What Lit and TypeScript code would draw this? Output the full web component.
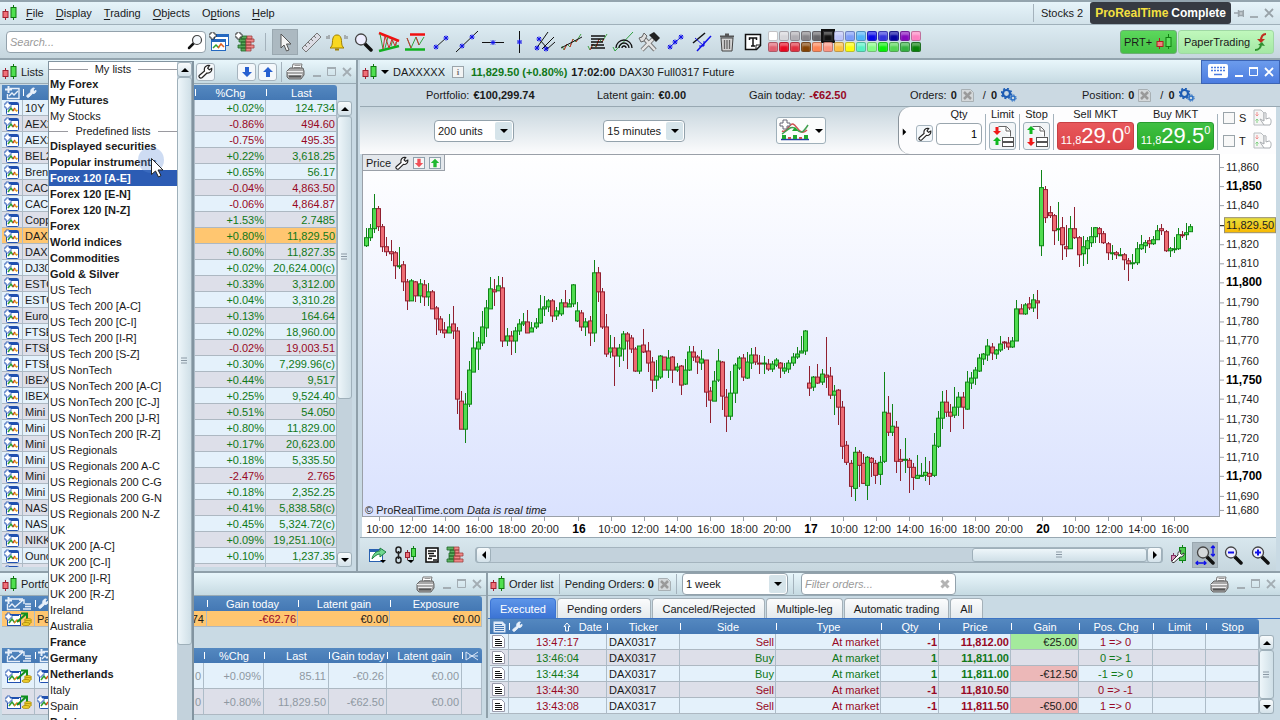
import { LitElement, html, svg, css, nothing } from "lit";
import { customElement } from "lit/decorators.js";
import { classMap } from "lit/directives/class-map.js";

/* ---------- data ---------- */

// candle: direction, wick top, body top, body bottom, wick bottom
const CANDLES = `g229,238,246,248 g225,229,238,242 g195,209,229,234 r207,209,227,232 r225,227,247,253 r238,247,252,257 r241,252,254,262 r252,253,266,280 g248,266,267,270 r262,265,282,292
r280,282,301,311 g280,281,301,302 r282,282,296,303 g280,284,296,304 r281,285,297,307 g284,292,297,307 r291,292,309,310 r307,308,319,336 r317,319,330,334 r323,330,333,339
g315,327,333,334 r307,324,331,340 r328,331,399,414 r391,401,429,429 g393,404,429,443 g361,370,404,407 g333,348,372,372 g338,342,349,370 g312,327,343,346 g301,308,328,338
g278,289,309,309 r280,290,292,307 g277,286,291,292 r278,288,341,347 g329,336,341,346 r332,336,341,355 g328,331,341,353 g320,324,331,336 g314,322,324,327 r311,322,333,334
g323,328,332,332 g319,323,327,330 g296,309,323,325 g297,307,309,317 g300,301,307,313 r300,301,316,323 g308,311,316,321 g300,303,314,317 r291,303,307,308 g300,304,307,308
g285,285,304,308 g303,311,321,323 r311,313,327,332 g319,322,327,337 r317,321,333,346 g261,273,333,343 r268,273,292,303 r289,292,327,330 r315,327,354,357 g336,348,352,358
r338,348,356,386 g345,348,356,367 g332,334,349,361 r333,334,341,369 r336,338,349,353 r347,349,371,372 g346,346,371,374 r330,345,352,353 r343,351,363,372 r357,362,380,392
g360,376,380,389 g355,356,377,379 r357,357,370,370 g350,358,370,378 r356,357,370,383 g363,367,370,372 r365,366,385,395 g359,370,384,385 g346,352,370,371 r346,352,357,361
r355,357,362,374 g350,359,363,370 r360,360,392,407 r387,391,400,423 g371,381,401,401 g349,361,380,382 r361,362,396,410 r389,397,416,432 g371,393,416,420 g363,365,393,403
g356,358,368,370 r354,358,377,381 g352,362,378,379 g348,355,363,369 r347,355,362,365 r355,363,364,374 g356,363,364,374 r359,364,369,371 g361,364,369,372 g358,360,365,367
r362,363,368,378 g363,368,371,374 g360,363,369,373 g353,357,363,366 g347,354,357,359 g337,351,353,353 g331,331,351,355 r366,383,388,396 g376,377,387,391 r364,377,383,384
g369,374,382,385 r338,375,377,388 r367,376,395,399 g385,391,395,415 r389,390,407,425 r401,407,446,459 r441,445,462,465 r460,463,486,497 g447,452,488,501 r450,452,465,487
r454,463,483,484 g456,457,485,500 r457,458,462,477 r460,463,475,484 g456,462,474,485 g372,412,461,463 r396,413,432,436 g404,426,432,436 r421,427,461,473 r449,459,461,481
g438,459,460,473 r458,460,467,493 r463,467,477,490 g455,475,478,479 g463,475,476,477 g457,472,475,481 r461,473,476,485 g433,445,475,477 g411,418,446,448 g391,402,418,429
r390,402,412,417 r404,412,416,432 g387,407,415,418 g392,397,407,416 r392,397,407,429 g371,382,409,410 g372,378,383,389 g367,370,378,385 g354,358,371,372 g353,354,359,365
g340,346,355,361 r344,347,353,360 g349,350,354,359 g337,344,350,352 r342,342,343,349 r338,343,347,350 g338,341,347,348 g301,309,341,342 r305,309,314,315 g304,305,314,316
r298,304,308,311 g295,300,308,313 r291,301,303,320 g171,188,246,257 r187,190,218,224 r207,213,216,219 r215,216,231,246 g203,229,230,242 r218,228,245,261 r226,247,249,258
g217,229,249,250 r208,229,238,240 r237,238,255,268 g237,247,254,267 g238,241,249,265 g228,237,243,248 g228,228,237,244 r228,229,234,244 r232,234,243,245 r243,244,253,261
g246,253,254,261 r252,253,255,260 g249,255,256,257 r254,255,260,271 r259,261,264,282 g255,263,264,270 g243,249,263,266 g236,245,249,251 g241,243,246,254 r238,241,244,249
g237,240,244,246 g226,231,240,241 r225,229,231,236 r231,232,251,253 g248,249,251,258 g238,249,250,254 g229,235,249,251 r232,235,236,239 g224,233,235,241 g225,227,232,233`
  .split(/\s+/)
  .map((s) => ({ up: s[0] === "g", v: s.slice(1).split(",").map((n) => +n - 155) }));

const PRICE_TICKS: [number, string, boolean?][] = [
  [13, "11,860"], [32, "11,850", true], [51, "11,840"], [90, "11,820"], [109, "11,810"], [128, "11,800", true],
  [148, "11,790"], [167, "11,780"], [186, "11,770"], [206, "11,760"], [225, "11,750", true], [244, "11,740"],
  [264, "11,730"], [283, "11,720"], [302, "11,710"], [321, "11,700", true], [341, "11,690"], [355, "11,680"],
];

const DAY = ["10:00", "12:00", "14:00", "16:00", "18:00", "20:00"];
const TIME_TICKS: [number, string, boolean?][] = [
  ...DAY.map((t, i) => [17 + i * 33, t] as [number, string]),
  [216, "16", true],
  ...DAY.map((t, i) => [249 + i * 33, t] as [number, string]),
  [448, "17", true],
  ...DAY.map((t, i) => [481 + i * 33, t] as [number, string]),
  [680, "20", true],
  ...DAY.slice(0, 4).map((t, i) => [713 + i * 33, t] as [number, string]),
];

const QUOTES: [string, string, string][] = [
  ["10Y", "+0.02%", "124.734"], ["AEX2", "-0.86%", "494.60"], ["AEX2", "-0.75%", "495.35"],
  ["BEL2", "+0.22%", "3,618.25"], ["Bren", "+0.65%", "56.17"], ["CAC", "-0.04%", "4,863.50"],
  ["CAC", "-0.06%", "4,864.87"], ["Copp", "+1.53%", "2.7485"], ["DAX", "+0.80%", "11,829.50"],
  ["DAX", "+0.60%", "11,827.35"], ["DJ30", "+0.02%", "20,624.00(c)"], ["ESTO", "+0.33%", "3,312.00"],
  ["ESTO", "+0.04%", "3,310.28"], ["Euro", "+0.13%", "164.64"], ["FTSE", "+0.02%", "18,960.00"],
  ["FTSE", "-0.02%", "19,003.51"], ["FTSE", "+0.30%", "7,299.96(c)"], ["IBEX", "+0.44%", "9,517"],
  ["IBEX", "+0.25%", "9,524.40"], ["Mini", "+0.51%", "54.050"], ["Mini", "+0.80%", "11,829.00"],
  ["Mini", "+0.17%", "20,623.00"], ["Mini", "+0.18%", "5,335.50"], ["Mini", "-2.47%", "2.765"],
  ["Mini", "+0.18%", "2,352.25"], ["NAS", "+0.41%", "5,838.58(c)"], ["NAS", "+0.45%", "5,324.72(c)"],
  ["NIKK", "+0.09%", "19,251.10(c)"], ["Ounc", "+0.10%", "1,237.35"], ["", "", ""],
];

const LISTS: [string, string][] = [
  ["h", "My lists"], ["b", "My Forex"], ["b", "My Futures"], ["n", "My Stocks"], ["h", "Predefined lists"],
  ["b", "Displayed securities"], ["b", "Popular instruments"], ["s", "Forex 120 [A-E]"], ["b", "Forex 120 [E-N]"],
  ["b", "Forex 120 [N-Z]"], ["b", "Forex"], ["b", "World indices"], ["b", "Commodities"], ["b", "Gold & Silver"],
  ["n", "US Tech"], ["n", "US Tech 200 [A-C]"], ["n", "US Tech 200 [C-I]"], ["n", "US Tech 200 [I-R]"],
  ["n", "US Tech 200 [S-Z]"], ["n", "US NonTech"], ["n", "US NonTech 200 [A-C]"], ["n", "US NonTech 200 [C-J]"],
  ["n", "US NonTech 200 [J-R]"], ["n", "US NonTech 200 [R-Z]"], ["n", "US Regionals"], ["n", "US Regionals 200 A-C"],
  ["n", "US Regionals 200 C-G"], ["n", "US Regionals 200 G-N"], ["n", "US Regionals 200 N-Z"], ["n", "UK"],
  ["n", "UK 200 [A-C]"], ["n", "UK 200 [C-I]"], ["n", "UK 200 [I-R]"], ["n", "UK 200 [R-Z]"], ["n", "Ireland"],
  ["n", "Australia"], ["b", "France"], ["b", "Germany"], ["b", "Netherlands"], ["n", "Italy"], ["n", "Spain"],
  ["b", "Belgium"],
];

const ORDERS: string[][] = [
  ["13:47:17", "Sell", "-1", "11,812.00", "€25.00", "1 => 0"],
  ["13:46:04", "Buy", "1", "11,811.00", "", "0 => 1"],
  ["13:44:34", "Buy", "1", "11,811.00", "-€12.50", "-1 => 0"],
  ["13:44:30", "Sell", "-1", "11,810.50", "", "0 => -1"],
  ["13:43:08", "Sell", "-1", "11,811.50", "-€50.00", "1 => 0"],
];

const PALETTE = [
  "#ffffff", "#d6d6da", "#b0aeb4", "#868488", "#66666a", "#111111", "#bcc4f8", "#7c9cf8", "#50b4f8", "#0808e8",
  "#3434dc", "#0404a0", "#8408bc", "#fc80c0", "#e06070", "#e80820", "#e03040", "#844404", "#fc8454", "#fc9480",
  "#fcc040", "#fcfc08", "#54f0c4", "#84fc84", "#08f008", "#54d454", "#34b040", "#088008",
];

/* ---------- icons ---------- */

const ico = (w: number, h: number, body: unknown) =>
  html`<svg class="ico" width=${w} height=${h} viewBox="0 0 ${w} ${h}" aria-hidden="true">${body}</svg>`;

const candles = () =>
  ico(15, 16, svg`<path d="M3.500 4v11" stroke="#a02030"/><rect x="1" y="6.500" width="5" height="6" fill="#f07078" stroke="#a02030"/>
    <path d="M11.500 0v15" stroke="#107810"/><rect x="9" y="2.500" width="5" height="10" fill="#50e050" stroke="#107810"/>`);

const wrenchPath = "M1.500 13.500c-1-1-.6-1.700 0-2.300L6.500 7C6 4.500 7 2 10 1.300L11.500 1.500 9.700 4.200l1.600 1.500 2.400-1.200C14.200 7 12 9.500 9 9L4 13.700c-.8.800-1.800.6-2.500-.2z";
const wrench = (fill = "#fff", stroke = "#222", s = 15) =>
  html`<svg class="ico" width=${s} height=${s} viewBox="0 0 15 15" aria-hidden="true"><path d=${wrenchPath} fill=${fill} stroke=${stroke} stroke-width="1.200"/></svg>`;

const addChart = (mono = false) =>
  ico(15, 14, mono
    ? svg`<path d="M4.500 2.500h9.500v10H2.500V8" fill="none" stroke="#e8f0fa" stroke-width="1.400"/><path d="M3.500 0v7M0 3.500h7" stroke="#e8f0fa" stroke-width="2"/><path d="M4 10l3-3 2 2 4-4" stroke="#e8f0fa" fill="none" stroke-width="1.400"/>`
    : svg`<rect x="2.500" y="1.500" width="12" height="12" rx="1" fill="#fff" stroke="#2050b0"/><path d="M3 2h11v2H3z" fill="#2050b0"/><path d="M4 11l3-4 2 3" stroke="#30a030" fill="none" stroke-width="1.500"/><path d="M9 10l2-3" stroke="#d04020" stroke-width="1.500"/><path d="M10.500 8l2 2 1-1" stroke="#e0a020" fill="none" stroke-width="1.500"/><path d="M2 1h3v2h2v3H5v2H2V6H0V3h2z" fill="#fff" stroke="#2050b0" stroke-width=".8"/>`);

const tradeChart = (mono = false) =>
  ico(27, 14, mono
    ? svg`<path d="M4 2h14M2.500 7v5.500H15" fill="none" stroke="#e8f0fa" stroke-width="1.400"/><path d="M3.500 0v7M0 3.500h7" stroke="#e8f0fa" stroke-width="2"/><path d="M4 10l3-3 3 3 8-7M14 3h5v4" stroke="#e8f0fa" fill="none" stroke-width="1.400"/><path d="M20 7h6M20 9.500h6M18 12h8" stroke="#e8f0fa" stroke-width="1.600"/>`
    : svg`<rect x="2.500" y="2.500" width="13" height="11" fill="#fff" stroke="#2050b0"/><path d="M3 2h11v2H3z" fill="#2050b0"/><path d="M4 11l3-4 3 4" stroke="#30a030" fill="none" stroke-width="1.500"/><path d="M9 11l3-3 3 2" stroke="#e08020" fill="none" stroke-width="1.500"/><path d="M12 10L21 2M16 1.500h6V7" stroke="#109020" fill="none" stroke-width="2"/><path d="M2 1h3v2h2v3H5v2H2V6H0V3h2z" fill="#fff" stroke="#2050b0" stroke-width=".8"/><ellipse cx="23" cy="8" rx="3.500" ry="1.500" fill="#f0d030" stroke="#a08000" stroke-width=".7"/><ellipse cx="23" cy="10" rx="3.500" ry="1.500" fill="#f0d030" stroke="#a08000" stroke-width=".7"/><ellipse cx="21" cy="12" rx="4" ry="1.500" fill="#f0d030" stroke="#a08000" stroke-width=".7"/>`);

const printer = () =>
  ico(19, 17, svg`<path d="M6 6L7 1h9l-1 5z" fill="#fff" stroke="#777"/><path d="M8.500 2.500h6M8 4.500h6" stroke="#999"/><path d="M1 8l3-3h13l1 3v4l-3 4H3l-2-2z" fill="#a9a9a9" stroke="#666"/><path d="M1 8.500h16M2 11.500h14" stroke="#eee"/><path d="M3 13.500h12" stroke="#555" stroke-width="2"/>`);

const arrow = (up: boolean, c: string, w = 12) =>
  html`<svg class="ico" width=${w} height=${w} viewBox="0 0 12 12" aria-hidden="true"><path d=${up ? "M6 1l5 5H8v5H4V6H1z" : "M6 11L1 6h3V1h4v5h3z"} fill=${c}/></svg>`;

const winMin = (c: string) => ico(10, 12, svg`<path d="M1 10h8" stroke=${c} stroke-width="2"/>`);
const winMax = (c: string) => ico(10, 12, svg`<path d="M.500 1.500h8v8h-8z" fill="none" stroke=${c}/><path d="M0 2h9" stroke=${c} stroke-width="2"/>`);
const winClose = (c: string) => ico(10, 12, svg`<path d="M1 2l8 8M9 2l-8 8" stroke=${c} stroke-width="1.800"/>`);
const winButtons = (c = "#a3adb3") => html`
  <button class="plain" aria-label="Minimize">${winMin(c)}</button>
  <button class="plain" aria-label="Maximize">${winMax(c)}</button>
  <button class="plain" aria-label="Close">${winClose(c)}</button>`;

const tri = (dir: "up" | "down" | "left" | "right") => {
  const d = { up: "M0 6l4-4 4 4z", down: "M0 2l4 4 4-4z", left: "M6 0L2 4l4 4z", right: "M2 0l4 4-4 4z" }[dir];
  return ico(8, 8, svg`<path d=${d} fill="#000"/>`);
};

const grip = () => ico(7, 8, svg`<path d="M0 1h6M0 3.500h6M0 6h6" stroke="#8a98a4"/>`);

const cancelIcon = () =>
  ico(13, 13, svg`<path d="M.500.500h9l3 3v9H.500z" fill="#d4d8da" stroke="#a8b0b4"/><path d="M3 3l7 7M10 3l-7 7" stroke="#9a9a9a" stroke-width="2.500"/>`);

const gears = () =>
  ico(16, 14, svg`<circle cx="5.500" cy="5.500" r="3.500" fill="none" stroke="#1c5cb4" stroke-width="2.200"/><circle cx="5.500" cy="5.500" r="5" fill="none" stroke="#1c5cb4" stroke-width="1.600" stroke-dasharray="2 1.900"/>
    <circle cx="12" cy="10" r="2" fill="none" stroke="#2c70c4" stroke-width="1.500"/><circle cx="12" cy="10" r="3.200" fill="none" stroke="#2c70c4" stroke-dasharray="1.400 1.100"/>`);

const stackIcon = () =>
  ico(18, 17, svg`<path d="M1 1h7v3H1zM3 7h6v3H3zM1 13h7v3H1zM4 4h5v3H4zM3 10h5v3H3z" fill="#5cb060" stroke="#206828" stroke-width=".8"/><path d="M8 1h5v3H8zM9 4h4v3H9zM9 7h8v3H9zM8 10h6v3H8zM8 13h9v3H8z" fill="#f08888" stroke="#a04040" stroke-width=".8"/>`);

const plus = svg`<path d="M2 0h3v2h2v3H5v2H2V5H0V2h2z" fill="#fff" stroke="#222" stroke-width=".8"/>`;
const x3 = (x: number, y: number) => svg`<path d="M${x - 2} ${y - 2}l4 4M${x + 2} ${y - 2}l-4 4M${x} ${y - 2.5}v5M${x - 2.5} ${y}h5" stroke="#1010e8"/>`;
const zig = svg`<path d="M2 15l2 4 3-6 3 3 3-8 3 3 5-8" fill="none" stroke="#40a040"/><path d="M4 19l3-6M10 16l3-8M16 11l2-3" stroke="#d03030"/>`;

const glass = (extra: unknown = nothing, fill = "#eef") =>
  ico(20, 20, svg`<path d="M12 12l6 6" stroke="#111" stroke-width="3.500" stroke-linecap="round"/><circle cx="8" cy="7.500" r="5.500" fill=${fill} stroke="#444" stroke-width="1.300"/>${extra}`);

const TOOLS: [string, unknown][] = [
  ["Pointer", ico(22, 22, svg`<path d="M7 3v14l3-3 2.500 6 2.500-1-2.500-6H17z" fill="#f4f4f4" stroke="#555"/>`)],
  ["Ruler", ico(22, 22, svg`<path d="M2 17L17 2l4 4L6 21z" fill="#dcdce4" stroke="#777"/><path d="M5 14l2 2M8 11l2 2M11 8l2 2M14 5l2 2" stroke="#777"/>`)],
  ["Alert", ico(22, 22, svg`<path d="M5 16c2-2 1-6 2-9 1-2.500 2-3 4-3s3 .500 4 3c1 3 0 7 2 9l1 1H4z" fill="#f8d820" stroke="#a08000"/><path d="M9 18.500h4" stroke="#a08000" stroke-width="2"/><path d="M3 4v4M1 5v3M19 4v4M21 5v3" stroke="#777"/>`)],
  ["Zoom", glass()],
  ["Triangle", ico(22, 22, svg`<path d="M1 2l20 8" stroke="#f01010" stroke-width="2.500"/><path d="M1 20l20-5" stroke="#10b020" stroke-width="2.500"/><path d="M2 3l3 15M7 17L10 6M13 15l2-7M18 14v-3" stroke="#30a040"/><path d="M5 18L7 5l4 12 3-9 3 7 2-5" stroke="#d03030" fill="none"/>`)],
  ["Range", ico(22, 22, svg`<path d="M6 3.500h15" stroke="#f01010" stroke-width="2.500"/><path d="M1 18.500h20" stroke="#10b020" stroke-width="2.500"/><path d="M3 7l4 10 5-11 3 8 5-8" stroke="#30a040" fill="none"/><path d="M3 7l4 10M12 6l3 8" stroke="#d03030"/>`)],
  ["Segment", ico(22, 22, svg`<path d="M6 16l10-9" stroke="#222"/>${x3(6, 16)}${x3(16, 7)}`)],
  ["Line", ico(22, 22, svg`<path d="M0 21L22 0" stroke="#111"/>${x3(6, 15)}${x3(16, 6)}`)],
  ["Horizontal line", ico(22, 22, svg`<path d="M0 11.500h22" stroke="#111"/>${x3(11, 11.5)}`)],
  ["Vertical line", ico(22, 22, svg`<path d="M11.500 0v22" stroke="#111"/>${x3(11.5, 11)}`)],
  ["Fork", ico(22, 22, svg`<path d="M2 18L14 1M8 18L20 6M12 19l9-8M5 8l9 10" stroke="#111"/>${x3(5, 8)}${x3(3, 17)}${x3(12, 18)}`)],
  ["Channel", ico(22, 22, svg`${zig}<path d="M1 17L22 6" stroke="#111"/>`)],
  ["Fibonacci", ico(22, 22, svg`${zig}<path d="M5 5h14M5 8h13M5 11h12M5 14h13M5 17h14" stroke="#111" stroke-width="1.600"/>`)],
  ["Arcs", ico(22, 22, svg`<path d="M1 16l2 4L21 1" stroke="#30a040" fill="none"/><path d="M4 17a8 8 0 0 1 16 0M7 17a5 5 0 0 1 10 0M10 17a2 2 0 0 1 4 0" stroke="#111" fill="none" stroke-width="1.300"/>`)],
  ["Settings", ico(22, 22, svg`<path d="M4 19L15 8" stroke="#666" stroke-width="4"/><path d="M4 5l13 14" stroke="#777" stroke-width="4.500"/><path d="M4 19L15 8M4 5l13 14" stroke="#e4e4e4" stroke-width="2.500"/><path d="M1 7l3-1 2-4 3 3-3 5-3 1z" fill="#ddd" stroke="#666"/><path d="M11 4l5-3 6 6-4 4z" fill="#222"/>`)],
  ["Move", ico(22, 22, svg`<path d="M6 16l11-10" stroke="#1010e8"/>${x3(6, 16)}${x3(11, 11)}${x3(17, 6)}`)],
  ["Duplicate", ico(22, 22, svg`<path d="M3 12L15 2" stroke="#111" stroke-width="1.500"/><path d="M7 20L21 5" stroke="#1010e8" stroke-width="1.500"/><path d="M5 7l9 8v-5M14 15H9" stroke="#1010e8" fill="none"/>`)],
  ["Delete", ico(22, 22, svg`<path d="M5 7h12l-1 13H6z" fill="#d4d4d4" stroke="#444"/><path d="M4 5.500h14M9 3.500h4" stroke="#555" stroke-width="2"/><path d="M8.500 9v9M11 9v9M13.500 9v9" stroke="#666" stroke-width="1.300"/>`)],
  ["Text", ico(22, 22, svg`<path d="M3.500 3.500h15v11l-4 4h-11z" fill="#fff" stroke="#111" stroke-width="1.500"/><path d="M14 18v-4h4" fill="none" stroke="#111"/><path d="M7.500 9V7h7v2M11 7v8M9 15h4" stroke="#111" stroke-width="1.500" fill="none"/>`)],
];

const handIcon = () =>
  ico(19, 18, svg`<path d="M1 1h7l3 3v12H1z" fill="#f6f6f6" stroke="#b8bcc0"/><path d="M4 3v4M2.500 5.500L4 7l1.500-1.500" stroke="#f09090" fill="none"/><path d="M4 14v-4M2.500 11.500L4 10l1.500 1.500" stroke="#80d080" fill="none"/><path d="M9 11l-2-1 4 6h6c2-3 1-7-1-7l-3 1V4c-1-1-2 0-2 0v8z" fill="#fff" stroke="#a8acb0"/>`);

const limitIcon = (stop: boolean) =>
  ico(22, 22, svg`<path d="M6.500 1.500h8l4 4v6" fill="#fff" stroke="#666"/><path d="M14 2v4h4" fill="none" stroke="#666"/><rect x="10.500" y="12.500" width="11" height="4" fill="#fff" stroke="#555"/><rect x="10.500" y="17.500" width="11" height="4" fill="#fff" stroke="#555"/>
    ${stop
      ? svg`<path d="M5 1l4 4H6.500v4h-3V5H1z" fill="#10b820"/><path d="M5 21l4-4H6.500v-4h-3v4H1z" fill="#f01818"/>`
      : svg`<path d="M5 10l4-4H6.500V2h-3v4H1z" fill="#f01818"/><path d="M5 12l4 4H6.500v4h-3v-4H1z" fill="#10b820"/>`}`);

const sheet = () =>
  ico(13, 13, svg`<path d="M.500.500h9l3 3v9H.500z" fill="#fff" stroke="#99a"/><path d="M3 4.500h5M3 6.500h7M3 8.500h7M3 10.500h7" stroke="#111"/>`);

/* ---------- price chart ---------- */

@customElement("price-chart")
export class PriceChart extends LitElement {
  static styles = css`
    :host { display: block; min-height: 0; font: 11px "Liberation Sans", Arial, sans-serif; position: relative; background: #fff; }
    .plot { display: block; width: 100%; height: 100%; overflow: hidden; }
    .wick-up, .wick-down { shape-rendering: crispEdges; }
    .body-up { fill: #50dc50; stroke: #108418; }
    .wick-up { stroke: #108418; }
    .body-down { fill: #ee6c74; stroke: #902030; }
    .wick-down { stroke: #902030; }
    .label { fill: #222; }
    .major { font-weight: bold; font-size: 12px; fill: #000; }
    .mid { text-anchor: middle; }
    .axis { stroke: #9aa0a8; }
    .italic { font-style: italic; }
    .caption { position: absolute; left: 0; top: 0; display: flex; align-items: center; gap: 4px; height: 17px; padding: 0 3px; background: #e4e8ec; border: 1px solid #9aa0a8; box-sizing: border-box; }
    .caption button { all: unset; display: flex; }
    .caption .arrow-box { background: #f6f6f6; border: 1px solid #8fa0ac; }
    .ico { display: block; }
  `;

  render() {
    const W = 914, H = 382, px = (n: number) => `${(n / W) * 100}%`, py = (n: number) => `${(n / H) * 100}%`;
    return html`
      <svg class="plot" role="img" aria-label="DAX30 15 minute candlestick chart">
        <defs>
          <linearGradient id="sky" x2="0" y2="1"><stop offset="0" stop-color="#fff"/><stop offset="1" stop-color="#dae2fe"/></linearGradient>
          <linearGradient id="gold" x2="0" y2="1"><stop offset="0" stop-color="#e8e040"/><stop offset="1" stop-color="#f8b800"/></linearGradient>
        </defs>
        <svg width="100%" height="100%" viewBox="0 0 914 382" preserveAspectRatio="none">
          <rect width="857" height="361" fill="url(#sky)"/>
          <path class="axis" d="M.500 0v361.500M0 361.500h858M857.500 0v361.500M0 .500h858" fill="none"/>
          ${CANDLES.map(({ up, v: [wt, bt, bb, wb] }, i) => {
            const x = Math.round(3.7 + i * 4.1447) + 0.5;
            return svg`<path class=${up ? "wick-up" : "wick-down"} d="M${x} ${wt}V${wb}"/>
              <rect class=${up ? "body-up" : "body-down"} x=${x - 2} y=${bt + 0.5} width="4" height=${Math.max(bb - bt, 1)}/>`;
          })}
          ${PRICE_TICKS.map(([y]) => svg`<path class="axis" d="M858 ${y + 0.5}h4"/>`)}
          <path d="M858 71.500h4" stroke="#000"/>
          ${TIME_TICKS.map(([x]) => svg`<path class="axis" d="M${x + 0.5} 362v4"/>`)}
          <rect x="862.500" y="63.500" width="51" height="15" fill="url(#gold)" stroke="#989070"/>
        </svg>
        ${PRICE_TICKS.map(([y, t, b]) => svg`<text class=${b ? "label major" : "label"} x=${px(864)} y=${py(y + 4)}>${t}</text>`)}
        <text class="label" x=${px(864)} y=${py(75)}>11,829.50</text>
        ${TIME_TICKS.map(([x, t, b]) => svg`<text class=${b ? "label mid major" : "label mid"} x=${px(x + 1)} y=${py(378)}>${t}</text>`)}
        <text class="label" x=${px(3)} y=${py(359)}>© ProRealTime.com</text>
        <text class="label italic" x=${px(105)} y=${py(359)}>Data is real time</text>
      </svg>
      <div class="caption">
        <span>Price</span>
        <button aria-label="Price settings">${wrench("#fff", "#222", 14)}</button>
        <button class="arrow-box" aria-label="Move down">${arrow(false, "#f05058", 10)}</button>
        <button class="arrow-box" aria-label="Move up">${arrow(true, "#20b830", 10)}</button>
      </div>`;
  }
}

/* ---------- application ---------- */

@customElement("app-root")
export class AppRoot extends LitElement {
  static styles = css`
    :host { display: flex; flex-direction: column; height: 100vh; overflow: hidden; position: relative; background: #c9dae4; color: #1a1a1a; font: 11px/14px "Liberation Sans", Arial, sans-serif; border-top: 2px solid #93a4ae; box-sizing: border-box; }
    * { box-sizing: border-box; }
    button { font: inherit; color: inherit; margin: 0; padding: 0; border: 0; background: none; display: flex; align-items: center; justify-content: center; }
    .ico { display: block; flex: none; }
    b { font-weight: bold; }
    .up { color: #107818; }
    .down { color: #980824; }
    .grow { flex: 1; }
    .plain { flex: none; }
    .sep { width: 1px; height: 18px; background: #a4b2bc; flex: none; }

    .menubar { display: flex; align-items: center; height: 22px; padding: 0 6px 0 2px; gap: 9px; background: linear-gradient(#e6f4fa, #d2e2ea); flex: none; }
    .menubar nav { display: flex; gap: 12px; }
    .menubar a { color: inherit; text-decoration: none; }
    .menubar u { text-underline-offset: 2px; }
    .menubar .brand { height: 22px; padding: 0 5px; background: #363a42; border-radius: 3px; color: #fff; font-weight: bold; display: flex; align-items: center; font-size: 12px; gap: 3px; }
    .brand em { color: #f4e040; font-style: normal; }
    .right { display: flex; align-items: center; gap: 3px; margin-left: auto; }
    .right .desk { padding: 0 4px; }
    .right .wins { display: flex; gap: 5px; }

    .toolbar { display: flex; align-items: center; height: 36px; padding: 0 6px; border-top: 1px solid #9fb0ba; border-bottom: 2px solid #93a4ae; background: linear-gradient(#dcebf2, #c6d6de); flex: none; }
    .search { display: flex; align-items: center; width: 200px; height: 22px; background: #fff; border: 1px solid #93a2ac; border-radius: 4px; padding: 0 2px 0 3px; }
    input { font: inherit; }
    .search input, .filter input { flex: 1; min-width: 0; border: 0; outline: 0; background: none; padding: 0; }
    ::placeholder { color: #9a9a9a; font-style: italic; opacity: 1; }
    .quick { width: 26px; height: 26px; }
    .toolbar .sep { margin: 0 6px 0 7px; }
    .tool { width: 26px; height: 26px; flex: none; }
    .tool.on { background: #acb9c1; border: 1px solid #9aa8b0; }
    .palette { display: grid; grid-template-columns: repeat(14, 11px); grid-auto-rows: 11px; margin: 1px 0 0 2px; }
    .swatch { width: 10px; height: 10px; border: 1px solid rgba(80, 80, 90, .35); border-radius: 2px; box-shadow: inset 0 3px 2px rgba(255, 255, 255, .35); }
    .swatch.current { outline: 2px solid #111; border-radius: 0; }
    .mode { height: 24px; border: 1px solid #6cae74; border-radius: 3px; gap: 4px; }
    .mode.live { width: 57px; background: linear-gradient(#5cd85c, #44c044); }
    .mode.paper { width: 96px; background: linear-gradient(#c0f8bc, #a4e8a4); margin-left: 1px; border-color: #a0d8a4; }

    .upper { display: flex; flex: 1 1 0; min-height: 0; }
    .lower { display: flex; flex: none; border-top: 2px solid #8fa0aa; padding-bottom: 2px; }
    .panel { display: flex; flex-direction: column; min-width: 0; min-height: 0; }
    .titlebar { display: flex; align-items: center; height: 24px; flex: none; padding: 0 4px 0 2px; gap: 4px; background: linear-gradient(#e8f6fb, #c6dae2); border-bottom: 1px solid #98aab4; }
    .titlebar .sep { height: 20px; }
    .lower .titlebar { height: 23px; }
    .wins-row { display: flex; gap: 5px; padding-left: 3px; }

    .lists { width: 358px; flex: none; border-right: 2px solid #8fa0aa; }
    .lists-body { display: flex; flex: 1 1 0; min-height: 0; margin: 1px 4px 4px 2px; overflow: hidden; }
    .clip { flex: 1; overflow: hidden; }
    .square { width: 19px; height: 18px; background: #f4f8fb; border: 1px solid #a6b4be; border-radius: 3px; flex: none; }
    .pair { display: flex; gap: 2px; margin-left: 18px; }

    table { border-collapse: separate; border-spacing: 0; table-layout: fixed; width: 100%; }
    th { font-weight: normal; color: #fff; background: linear-gradient(#5488c0, #4478b4); height: 15px; padding: 0; text-align: center; white-space: nowrap; overflow: hidden; }
    th + th { background: linear-gradient(#fff, #fff) 0 4px / 1px 7px no-repeat, linear-gradient(#5488c0, #4478b4); }
    th:last-child { border-top-right-radius: 3px; }
    th .ico { margin-left: 3px; }
    .cell { display: flex; align-items: center; }
    td { height: 16px; padding: 0 2px; border-right: 1px solid #adbcc8; border-bottom: 1px solid #adb8c2; white-space: nowrap; overflow: hidden; line-height: 14px; }
    td.num { text-align: right; padding: 0 1px; }
    td.mid { text-align: center; }
    tbody tr { background: #e4f1fb; }
    tbody tr:nth-child(even) { background: #dddfe9; }
    tbody tr.hot { background: #ffc670; }
    .c-ico { width: 21px; }
    .quotes .c-chg { width: 71px; }
    .quotes .c-last { width: 71px; }

    .vscroll { width: 15px; flex: none; display: flex; flex-direction: column; background: #c3d2dc; }
    .vscroll button { height: 15px; background: linear-gradient(#f8fbfc, #d4e2ea); border: 1px solid #9fb0ba; border-radius: 3px; flex: none; }
    .thumb { display: flex; align-items: center; justify-content: center; background: linear-gradient(90deg, #eef6fa, #cfdfe7); border: 1px solid #9fb0ba; border-radius: 3px; flex: none; }
    .quotes-scroll { margin-top: 16px; }
    .quotes-scroll .thumb { flex: 282 1 0; }
    .quotes-scroll .rest { flex: 154 1 0; }

    .popup { position: absolute; left: 48px; top: 59px; bottom: 0; width: 146px; display: flex; background: #fff; border: 1px solid #8294a0; border-right-width: 2px; border-bottom: 0; overflow: hidden; }
    .options { flex: 1; min-width: 0; }
    .option { width: 100%; height: 16px; justify-content: flex-start; padding: 0 1px; white-space: nowrap; }
    .option.strong { font-weight: bold; }
    .option.chosen { font-weight: bold; background: #2c5cb4; color: #fff; }
    .heading { display: flex; align-items: center; gap: 7px; height: 14px; }
    .heading::before, .heading::after { content: ""; flex: 1; height: 1px; background: #9a9aa0; }
    .popup .thumb { height: 568px; }
    .pointer { position: absolute; left: 136px; top: 144px; }

    .chart-panel { flex: 1; padding: 0 0 0 2px; }
    .chart-panel .titlebar { padding-right: 0; }
    .info { width: 12px; height: 12px; border: 1px solid #9aa4aa; background: #f2f4f4; color: #777; font: bold 9px/10px "Liberation Serif", serif; margin: 0 3px; }
    .focus { display: flex; align-items: center; gap: 5px; height: 24px; width: 79px; padding-left: 6px; background: linear-gradient(#6c9cec, #4c7ce0); border: 1px solid #3c64b4; }
    .stats { display: grid; grid-template-columns: 171fr 152fr 161fr 172fr 198fr; height: 23px; align-items: center; padding-left: 66px; border-bottom: 1px solid #98a8b2; background: #cbd9e2; flex: none; }
    .stat { display: flex; align-items: center; gap: 4px; white-space: nowrap; }
    .stat i { font-style: normal; margin: 0 1px 0 5px; }
    .trade { display: flex; align-items: stretch; height: 47px; flex: none; background: linear-gradient(#c8d6de, #fcfcfd); margin-right: 4px; }
    .pickers { flex: 1; display: grid; grid-template-columns: 170fr 173fr 123fr; align-items: center; padding-left: 74px; }
    select { font: inherit; color: #1a1a1a; appearance: none; height: 22px; border: 1px solid #93a2ac; border-radius: 4px; padding: 0 18px 0 3px; outline: 0;
      background: url("data:image/svg+xml,%3Csvg xmlns='http://www.w3.org/2000/svg' width='17' height='18'%3E%3Crect width='17' height='18' rx='2' fill='%23d6e4ea'/%3E%3Cpath d='M5 7h8l-4 4z'/%3E%3C/svg%3E") right 1px center no-repeat #fff; }
    .units { width: 80px; }
    .period { width: 82px; }
    .indicator { width: 50px; height: 27px; background: #fbfcfc; border: 1px solid #9fb0ba; border-radius: 3px; gap: 4px; }
    .ticket { display: flex; align-items: flex-end; gap: 3px; background: #fdfdfe; border-left: 1px solid #8a949c; border-top-left-radius: 12px; border-bottom-left-radius: 12px; padding: 0 4px 4px 2px; }
    .ticket .sep { height: 36px; }
    .toggle { height: 36px; }
    .toggle svg { width: 7px; }
    .settings { margin: 0 0 8px 5px; width: 17px; height: 17px; }
    .field { display: flex; flex-direction: column; align-items: center; gap: 1px; }
    .field input { width: 46px; height: 22px; margin: 1px 0 5px; border: 1px solid #9aa6ae; border-radius: 4px; text-align: right; padding: 0 4px; background: #fff; }
    .order { width: 27px; height: 28px; border: 1px solid #9fb0ba; border-radius: 3px; background: #f2f5f7; }
    .price { width: 77px; height: 28px; border-radius: 3px; color: #fff; align-items: flex-start; }
    .price .big { font-size: 22px; line-height: 26px; }
    .price .lead { line-height: 34px; }
    .price.sell { background: linear-gradient(#e8585c, #dc4448); border: 1px solid #c84044; }
    .price.buy { background: linear-gradient(#40c044, #28ac28); border: 1px solid #289c30; }
    .flags { display: flex; flex-direction: column; gap: 5px; padding-left: 2px; }
    .flag { display: flex; align-items: center; gap: 6px; height: 18px; }
    .flag input { appearance: none; width: 12px; height: 12px; margin: 0; border: 1px solid #9aa4aa; background: #f8f8f8; }
    .flag label { display: flex; align-items: center; gap: 4px; }
    .flag span { width: 8px; }
    price-chart { flex: 1 1 0; margin: 0 4px 0 2px; }
    .chartbar { display: flex; align-items: center; height: 34px; flex: none; border-top: 1px solid #98a8b2; padding: 0 6px 0 8px; margin-right: 4px; background: linear-gradient(#d8e7ee, #c6d6de); gap: 7px; }
    .hscroll { flex: 1; display: flex; height: 16px; background: #c3d2dc; border: 1px solid #a4b4be; border-radius: 3px; margin-left: 4px; }
    .hscroll button { width: 15px; background: linear-gradient(#f8fbfc, #d4e2ea); border: 1px solid #9fb0ba; border-radius: 3px; margin: -1px 0; flex: none; }
    .hscroll .gap { flex: 484 1 0; }
    .hscroll .thumb { flex: 174 1 0; background: linear-gradient(#eef6fa, #cfdfe7); }
    .chartbar .tool { margin: 0 -2px; }

    .portfolio { width: 488px; flex: none; border-right: 2px solid #8fa0aa; }
    .portfolio table { margin: 0 4px 0 2px; width: auto; }
    .portfolio table + table { margin-top: 21px; }
    .portfolio .tall td { height: 26px; color: #8e98a2; }
    .portfolio .tall .num { padding-right: 2px; }
    .portfolio td.first { padding: 0 0 0 3px; }

    .orders { flex: 1; }
    .orders .sep { margin: 0 1px; }
    .filter { display: flex; align-items: center; width: 155px; height: 22px; background: #fff; border: 1px solid #93a2ac; border-radius: 4px; padding: 0 5px 0 3px; margin-left: 2px; }
    .week { width: 106px; }
    .tabs { display: flex; gap: 1px; padding: 2px 0 0 2px; border-bottom: 1px solid #3c74c4; }
    .tab { height: 20px; padding: 0 9px; background: linear-gradient(#fbfcfd, #e4eaee); border: 1px solid #a4b0b8; border-bottom: 0; border-radius: 4px 4px 0 0; white-space: nowrap; }
    .tab.on { background: linear-gradient(#5c94e8, #3c74d4); color: #fff; border-color: #3c74d4; }
    .orders-body { display: flex; padding: 0 6px 4px 2px; }
    .orders-scroll { margin-top: 16px; }
    .orders-scroll .thumb { flex: 1; }
    .gain { background: #a4ea9c; }
    .loss { background: #ecb8b8; }
    .bold { font-weight: bold; }
  `;

  private scroll(cls: string, rest = false) {
    return html`<div class="vscroll ${cls}">
      <button aria-label="Scroll up">${tri("up")}</button>
      <div class="thumb">${grip()}</div>
      ${rest ? html`<div class="rest"></div>` : nothing}
      ${cls === "menu-scroll" ? nothing : html`<button aria-label="Scroll down">${tri("down")}</button>`}
    </div>`;
  }

  private renderTop() {
    return html`
      <header class="menubar">
        ${candles()}
        <nav>
          <a href="#"><u>F</u>ile</a><a href="#"><u>D</u>isplay</a><a href="#"><u>T</u>rading</a>
          <a href="#"><u>O</u>bjects</a><a href="#">O<u>p</u>tions</a><a href="#"><u>H</u>elp</a>
        </nav>
        <div class="right">
          <span class="sep"></span><span class="desk">Stocks 2</span>
          <span class="brand"><em>ProRealTime</em><span>Complete</span></span>
          <div class="wins">
            <button class="plain" aria-label="Pin">${ico(10, 12, svg`<path d="M0 6h4M4.500 3v7M5 4.500h4v4H5zM9.500 3v7" stroke="#9aa4aa" fill="#c0c8cc" stroke-width="1.400"/>`)}</button>
            <button class="plain" aria-label="Minimize">${winMin("#a3adb3")}</button>
            <button class="plain" aria-label="Close">${winClose("#98a2a8")}</button>
          </div>
        </div>
      </header>
      <div class="toolbar">
        <div class="search">
          <input type="search" placeholder="Search..." aria-label="Search">
          ${ico(16, 16, svg`<path d="M6.500 9.500L2 14" stroke="#111" stroke-width="2.500" stroke-linecap="round"/><circle cx="10" cy="6" r="4.500" fill="#f4f8fc" stroke="#444" stroke-width="1.200"/>`)}
        </div>
        <button class="quick" aria-label="New chart">${ico(20, 20, svg`<rect x="5.500" y="2.500" width="14" height="11" fill="#fff" stroke="#2468c0"/><path d="M5 3h15v2H5z" fill="#2468c0"/><rect x="2.500" y="7.500" width="14" height="11" fill="#fff" stroke="#2468c0"/><path d="M2 8h15v2H2z" fill="#2468c0"/><path d="M4 16l3-3 3 3" stroke="#30a030" fill="none" stroke-width="1.500"/><path d="M9 16l3-4 3 3" stroke="#e06020" fill="none" stroke-width="1.500"/>${plus}`)}</button>
        <button class="quick" aria-label="Add list">${ico(20, 20, svg`<path d="M6 4h6v3H6zM4 7h7v3H4zM6 10h5v3H6zM3 13h8v3H3zM6 16h5v3H6z" fill="#58a858" stroke="#206828" stroke-width=".8"/><path d="M12 4h5v3h-5zM11 7h8v3h-8zM11 10h5v3h-5zM11 13h8v3h-8zM11 16h5v3h-5z" fill="#f08888" stroke="#a04040" stroke-width=".8"/>${plus}`)}</button>
        <span class="sep"></span>
        ${TOOLS.map(([name, icon], i) => html`<button class=${classMap({ tool: true, on: i === 0 })} aria-label=${name}>${icon}</button>`)}
        <div class="palette">
          ${PALETTE.map((c, i) => html`<button class=${classMap({ swatch: true, current: i === 5 })} style="background-color:${c}" aria-label="Colour ${c}"></button>`)}
        </div>
        <span class="grow"></span>
        <button class="mode live">PRT+ ${ico(17, 16, svg`<path d="M3.500 4v11" stroke="#b02020"/><rect x="1" y="7.500" width="6" height="5" fill="#f08080" stroke="#b02020"/><path d="M12.500 0v15" stroke="#108010"/><rect x="10" y="3.500" width="5" height="9" fill="#60e060" stroke="#108010"/>`)}</button>
        <button class="mode paper">PaperTrading ${ico(14, 18, svg`<path d="M12 1C8 1 7 4 7 8" stroke="#c03020" stroke-width="2" fill="none"/><path d="M3 6h8L7 10z" fill="#c03020"/><path d="M1 17c4 0 6-3 6-6" stroke="#309030" stroke-width="2" fill="none"/><path d="M4 12l4-3 3 4z" fill="#309030"/>`)}</button>
      </div>`;
  }

  private renderLists() {
    return html`
      <section class="panel lists">
        <div class="titlebar">
          ${candles()}<span>Lists</span><span class="grow"></span>
          <button class="square" aria-label="List settings">${wrench()}</button>
          <div class="pair">
            <button class="square" aria-label="Move down">${arrow(false, "#2860d0")}</button>
            <button class="square" aria-label="Move up">${arrow(true, "#2860d0")}</button>
          </div>
          <span class="sep"></span>
          <button class="plain" aria-label="Print">${printer()}</button>
          <div class="wins-row">${winButtons()}</div>
        </div>
        <div class="lists-body">
          <div class="clip">
            <table class="quotes">
              <colgroup><col class="c-ico"><col><col class="c-chg"><col class="c-last"></colgroup>
              <thead><tr><th>${addChart(true)}</th><th>${wrench("#e8f0fa", "#e8f0fa", 11)}</th><th>%Chg</th><th>Last</th></tr></thead>
              <tbody>
                ${QUOTES.map(([n, c, l], i) => {
                  const dir = c[0] === "-" ? "down" : "up";
                  return html`<tr class=${i === 8 ? "hot" : ""}><td>${addChart()}</td><td>${n}</td><td class="num ${dir}">${c}</td><td class="num ${dir}">${l}</td></tr>`;
                })}
              </tbody>
            </table>
          </div>
          ${this.scroll("quotes-scroll", true)}
        </div>
      </section>`;
  }

  private renderChart() {
    return html`
      <section class="panel chart-panel">
        <div class="titlebar">
          ${candles()}${tri("down")}<span>DAXXXXX</span>
          <button class="info" aria-label="Information">i</button>
          <b class="up">11,829.50 (+0.80%)</b><b>17:02:00</b><span>DAX30 Full0317 Future</span>
          <span class="grow"></span>
          <div class="focus">
            <button class="plain" aria-label="Keyboard">${ico(21, 15, svg`<rect width="20" height="14" rx="2" fill="#fff"/><path d="M3 3.500h14M3 6.500h14" stroke="#4c7ce0" stroke-width="1.500" stroke-dasharray="2 1"/><path d="M6 10.500h8" stroke="#4c7ce0" stroke-width="1.500"/>`)}</button>
            ${winButtons("#fff")}
          </div>
        </div>
        <div class="stats">
          <div class="stat">Portfolio: <b>€100,299.74</b></div>
          <div class="stat">Latent gain: <b>€0.00</b></div>
          <div class="stat">Gain today: <b class="down">-€62.50</b></div>
          <div class="stat">Orders: <b>0</b>${cancelIcon()}<i>/</i><b>0</b>${gears()}</div>
          <div class="stat">Position: <b>0</b>${cancelIcon()}<i>/</i><b>0</b>${gears()}</div>
        </div>
        <div class="trade">
          <div class="pickers">
            <select class="units" aria-label="Units"><option>200 units</option></select>
            <select class="period" aria-label="Period"><option>15 minutes</option></select>
            <button class="indicator" aria-label="Indicators">${ico(32, 23, svg`<path d="M3 12c5 3 7-8 11-7s7 13 14 6" stroke="#d05050" fill="none" stroke-width="1.500"/><path d="M3 15c4-2 9-10 14-5s7 4 12-4" stroke="#40a050" fill="none" stroke-width="1.500"/><path d="M2 20.500h28" stroke="#2040a0" stroke-width="1.500"/><path d="M3 18h4M14 18h4M25 18h4" stroke="#20a830" stroke-width="4"/><path d="M9 19h3M20 19h3" stroke="#d05050" stroke-width="2"/><path d="M13 12l3-4 3 4z" fill="#20a830"/><path d="M4 1h4v3h3v3H8v3H4V7H1V4h3z" fill="#fff" stroke="#667"/>`)}${tri("down")}</button>
          </div>
          <div class="ticket">
            <button class="toggle" aria-label="Collapse ticket">${tri("right")}</button>
            <button class="square settings" aria-label="Ticket settings">${wrench("#fff", "#222", 14)}</button>
            <div class="field"><label for="qty">Qty</label><input id="qty" value="1"></div>
            <span class="sep"></span>
            <div class="field"><span>Limit</span><button class="order" aria-label="Limit order">${limitIcon(false)}</button></div>
            <span class="sep"></span>
            <div class="field"><span>Stop</span><button class="order" aria-label="Stop order">${limitIcon(true)}</button></div>
            <span class="sep"></span>
            <div class="field"><span>Sell MKT</span><button class="price sell"><span class="lead">11,8</span><span class="big">29.0</span><span>0</span></button></div>
            <div class="field"><span>Buy MKT</span><button class="price buy"><span class="lead">11,8</span><span class="big">29.5</span><span>0</span></button></div>
            <span class="sep"></span>
            <div class="flags">
              <div class="flag"><label><input type="checkbox"><span>S</span></label>${handIcon()}</div>
              <div class="flag"><label><input type="checkbox"><span>T</span></label>${handIcon()}</div>
            </div>
          </div>
        </div>
        <price-chart></price-chart>
        <div class="chartbar">
          <button class="plain" aria-label="Share">${ico(19, 17, svg`<rect x="1.500" y="3.500" width="13" height="12" fill="#fff" stroke="#2860b0"/><path d="M2 4h9v2H2z" fill="#2860b0"/><path d="M4 13c1-5 4-8 8-8V2l6 4-6 5V8c-3 0-5 2-8 5z" fill="#70d890" stroke="#208040"/><path d="M12 14h6l-3 3z"/>`)}</button>
          <button class="plain" aria-label="Link">${ico(24, 18, svg`<g fill="none" stroke="#222" stroke-width="1.500"><rect x="2" y="1" width="5" height="6" rx="2.500"/><rect x="2" y="11" width="5" height="6" rx="2.500"/><path d="M4.500 5v8"/></g><path d="M13.500 4v10" stroke="#902030"/><rect x="11.500" y="6.500" width="4" height="5" fill="#f07078" stroke="#902030"/><path d="M19.500 0v14" stroke="#108418"/><rect x="17.500" y="2.500" width="4" height="8" fill="#50dc50" stroke="#108418"/><path d="M13 14h7l-3 3z"/>`)}</button>
          <button class="plain" aria-label="News">${ico(14, 16, svg`<rect x="1" y="1" width="12" height="14" fill="#fff" stroke="#111" stroke-width="1.600"/><path d="M3 4h8M3 6.500h6M4 9h7M3 11.500h4M8 13h4" stroke="#111" stroke-width="1.500"/>`)}</button>
          <button class="plain" aria-label="Order book">${stackIcon()}</button>
          <div class="hscroll">
            <button aria-label="Scroll left">${tri("left")}</button><div class="gap"></div>
            <div class="thumb">${grip()}</div><button aria-label="Scroll right">${tri("right")}</button>
          </div>
          <button class="plain" aria-label="Chart settings">${ico(17, 19, svg`<path d="M3.500 8v10" stroke="#803060"/><rect x="1.500" y="10.500" width="4" height="5" fill="#d890b8" stroke="#803060"/><path d="M12.500 0v18" stroke="#108418"/><rect x="9.500" y="2.500" width="6" height="13" fill="#50c850" stroke="#108418"/><path d="M2 16l6-6c-.5-2 .5-4 3-4.500L10 8l1.500 1.500L14 8c.5 2-1.500 4.500-4 4l-6 5.500c-1.500.5-2.500-.5-2-1.500z" fill="#fff" stroke="#333"/>`)}</button>
          <button class="tool on" aria-label="Auto zoom">${glass(svg`<path d="M1 18h10M3 16l-2 2 2 2M9 16l2 2-2 2M18 1v10M16 3l2-2 2 2M16 9l2 2 2-2" stroke="#1010e8" fill="none" stroke-width="1.300"/>`, "#d4d8da")}</button>
          <button class="plain" aria-label="Zoom out">${glass(svg`<path d="M5 7.500h6" stroke="#1010e8" stroke-width="2"/>`)}</button>
          <button class="plain" aria-label="Zoom in">${glass(svg`<path d="M5 7.500h6M8 4.500v6" stroke="#1010e8" stroke-width="2"/>`)}</button>
        </div>
      </section>`;
  }

  private renderPortfolio() {
    return html`
      <section class="panel portfolio">
        <div class="titlebar">${candles()}<span>Portfolio</span><span class="grow"></span><button class="plain" aria-label="Print">${printer()}</button><div class="wins-row">${winButtons()}</div></div>
        <table>
          <colgroup><col width="33"><col><col width="91"><col width="92"><col width="92"></colgroup>
          <thead><tr><th>${tradeChart(true)}</th><th><div class="cell">${wrench("#e8f0fa", "#e8f0fa", 11)}</div></th><th>Gain today</th><th>Latent gain</th><th>Exposure</th></tr></thead>
          <tbody><tr class="hot"><td class="first">${tradeChart()}</td><td><div class="cell"><span>Pa</span><span class="grow"></span><span>74</span></div></td>
            <td class="num down">-€62.76</td><td class="num">€0.00</td><td class="num">€0.00</td></tr></tbody>
        </table>
        <table class="tall">
          <colgroup><col width="33"><col><col width="60"><col width="65"><col width="58"><col width="75"><col width="20"></colgroup>
          <thead><tr><th>${tradeChart(true)}</th><th><div class="cell">${addChart(true)}</div></th><th>%Chg</th><th>Last</th><th>Gain today</th><th>Latent gain</th>
            <th>${ico(14, 10, svg`<path d="M1 1l6 4-6 4zM7 5l6-4M7 5l6 4M4 5h9" stroke="#dce8f8" fill="none"/>`)}</th></tr></thead>
          <tbody>
            <tr><td class="first">${tradeChart()}</td><td><div class="cell">${addChart()}<span class="grow"></span>0</div></td><td class="num">+0.09%</td><td class="num">85.11</td><td class="num">-€0.26</td><td class="num">€0.00</td><td></td></tr>
            <tr><td class="first">${tradeChart()}</td><td><div class="cell">${addChart()}<span class="grow"></span>0</div></td><td class="num">+0.80%</td><td class="num">11,829.50</td><td class="num">-€62.50</td><td class="num">€0.00</td><td></td></tr>
          </tbody>
        </table>
      </section>`;
  }

  private renderOrders() {
    const tabs = ["Executed", "Pending orders", "Canceled/Rejected", "Multiple-leg", "Automatic trading", "All"];
    return html`
      <section class="panel orders">
        <div class="titlebar">
          ${candles()}<span>Order list</span><span class="sep"></span><span>Pending Orders: <b>0</b></span>${cancelIcon()}<span class="sep"></span>
          <select class="week" aria-label="Order period"><option>1 week</option></select><span class="sep"></span>
          <div class="filter"><input placeholder="Filter orders..." aria-label="Filter orders">
            <button aria-label="Clear filter">${ico(10, 10, svg`<path d="M1.500 1.500l7 7M8.500 1.500l-7 7" stroke="#b4b4b4" stroke-width="3"/>`)}</button></div>
          <span class="grow"></span><button class="plain" aria-label="Print">${printer()}</button><div class="wins-row">${winButtons()}</div>
        </div>
        <div class="tabs" role="tablist">${tabs.map((t, i) => html`<button role="tab" aria-selected=${i === 0} class=${classMap({ tab: true, on: i === 0 })}>${t}</button>`)}</div>
        <div class="orders-body">
          <table>
            <colgroup><col width="19"><col width="98"><col width="73"><col><col width="105"><col width="58"><col width="72"><col width="68"><col width="74"><col width="53"><col width="53"></colgroup>
            <thead><tr><th>${ico(13, 12, svg`<path d="M.500.500h9l3 3v8H.500z" fill="#dfeaf8"/><path d="M2 3.500h7M2 5.500h9M2 7.500h9M2 9.500h9" stroke="#4478b4"/>`)}</th>
              <th><div class="cell">${wrench("#e8f0fa", "#e8f0fa", 11)}<span class="grow"></span>${ico(8, 10, svg`<path d="M4 1l3 3.500H5.500V9h-3V4.500H1z" fill="none" stroke="#fff"/>`)}<span class="grow">&nbsp;Date</span></div></th>
              <th>Ticker</th><th>Side</th><th>Type</th><th>Qty</th><th>Price</th><th>Gain</th><th>Pos. Chg</th><th>Limit</th><th>Stop</th></tr></thead>
            <tbody>
              ${ORDERS.map(([time, side, qty, price, gain, chg]) => {
                const dir = side === "Buy" ? "up" : "down";
                return html`<tr><td>${sheet()}</td><td class="mid ${dir}">${time}</td><td>DAX0317</td><td class="num ${dir}">${side}</td><td class="num ${dir}">At market</td>
                  <td class="num bold ${dir}">${qty}</td><td class="num bold ${dir}">${price}</td>
                  <td class=${classMap({ num: true, gain: gain[0] === "€", loss: gain[0] === "-" })}>${gain}</td><td class="mid ${dir}">${chg}</td><td></td><td></td></tr>`;
              })}
            </tbody>
          </table>
          ${this.scroll("orders-scroll")}
        </div>
      </section>`;
  }

  render() {
    return html`
      ${this.renderTop()}
      <main class="upper">${this.renderLists()}${this.renderChart()}</main>
      <div class="lower">${this.renderPortfolio()}${this.renderOrders()}</div>
      <div class="popup">
        <div class="options" role="listbox" aria-label="Lists">
          ${LISTS.map(([k, t]) => k === "h"
            ? html`<div class="heading">${t}</div>`
            : html`<button role="option" aria-selected=${k === "s"} class=${classMap({ option: true, strong: k === "b", chosen: k === "s" })}>${t}</button>`)}
        </div>
        ${this.scroll("menu-scroll")}
      </div>
      <svg class="pointer" width="30" height="34" viewBox="0 0 30 34" aria-hidden="true">
        <circle cx="15" cy="14" r="13" fill="#5c8cd8" opacity=".3"/>
        <path d="M15.500 12.500v16l4-3.500 3 6 2.500-1.500-3-5.500h5z" fill="#fff" stroke="#222"/>
      </svg>`;
  }
}
